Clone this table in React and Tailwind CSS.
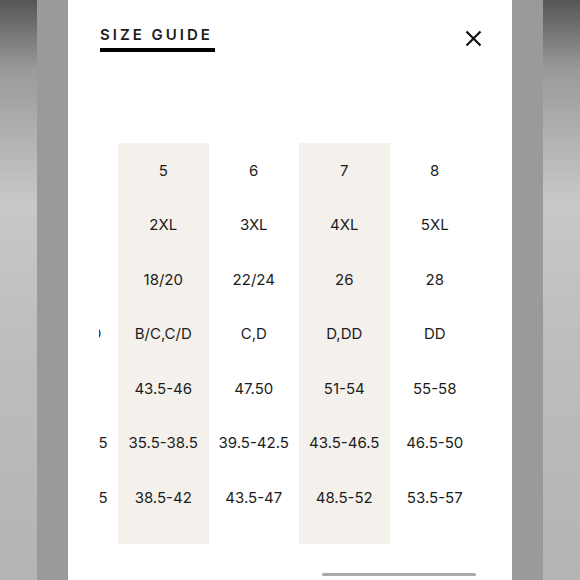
const columns = [
    { values: ['', '', '', 'B/C,C/D', '', '32.5-35.5', '34.5-38.5'], shaded: false },
    { values: ['5', '2XL', '18/20', 'B/C,C/D', '43.5-46', '35.5-38.5', '38.5-42'], shaded: true },
    { values: ['6', '3XL', '22/24', 'C,D', '47.50', '39.5-42.5', '43.5-47'], shaded: false },
    { values: ['7', '4XL', '26', 'D,DD', '51-54', '43.5-46.5', '48.5-52'], shaded: true },
    { values: ['8', '5XL', '28', 'DD', '55-58', '46.5-50', '53.5-57'], shaded: false },
]

function SizeColumn({ values, shaded }) {
    return (
        <div className={`w-[90.5px] shrink-0 pb-[19px] ${shaded ? 'bg-[#f4f1ec]' : ''}`}>
            {values.map((v, i) => (
                <div key={i} className="flex h-[54.5px] items-center justify-center whitespace-nowrap">
                    {v}
                </div>
            ))}
        </div>
    )
}

function App() {
    return (
        <div className="flex h-[580px] w-[580px] overflow-hidden">
            <div className="w-[37px] shrink-0 bg-[linear-gradient(to_bottom,#565656_0%,#9a9a9a_12%,#c9c8c9_35%,#bdbdbd_60%,#b4b4b6_100%)]" />
            <div className="w-[31px] shrink-0 bg-[#9a9a9a]" />

            <div className="relative flex-1 bg-white font-['Inter',sans-serif] text-[#1c1c1c]">
                <div className="flex items-start justify-between pl-8 pr-[30px] pt-[27px]">
                    <div>
                        <h2 className="text-[15px] font-semibold leading-[16px] tracking-[0.2em]">SIZE GUIDE</h2>
                        <div className="mt-[5px] h-[4px] w-[115px] bg-black" />
                    </div>
                    <svg className="mt-[3px]" width="17" height="17" viewBox="0 0 17 17" fill="none">
                        <path d="M1.5 1.5L15.5 15.5M15.5 1.5L1.5 15.5" stroke="#111" strokeWidth="2.2" />
                    </svg>
                </div>

                <div className="ml-[31px] mr-[30px] mt-[91px] overflow-hidden">
                    <div className="-ml-[71.5px] flex text-[15px] leading-none">
                        {columns.map((c, i) => (
                            <SizeColumn key={i} values={c.values} shaded={c.shaded} />
                        ))}
                    </div>
                </div>

                <div className="absolute bottom-[4px] left-[254px] h-[3px] w-[154px] rounded-full bg-[#a9a9a9]" />
            </div>

            <div className="w-[31px] shrink-0 bg-[#9a9a9a]" />
            <div className="w-[37px] shrink-0 bg-[linear-gradient(to_bottom,#565656_0%,#9a9a9a_12%,#c9c8c9_35%,#bdbdbd_60%,#b4b4b6_100%)]" />
        </div>
    )
}

export default App
